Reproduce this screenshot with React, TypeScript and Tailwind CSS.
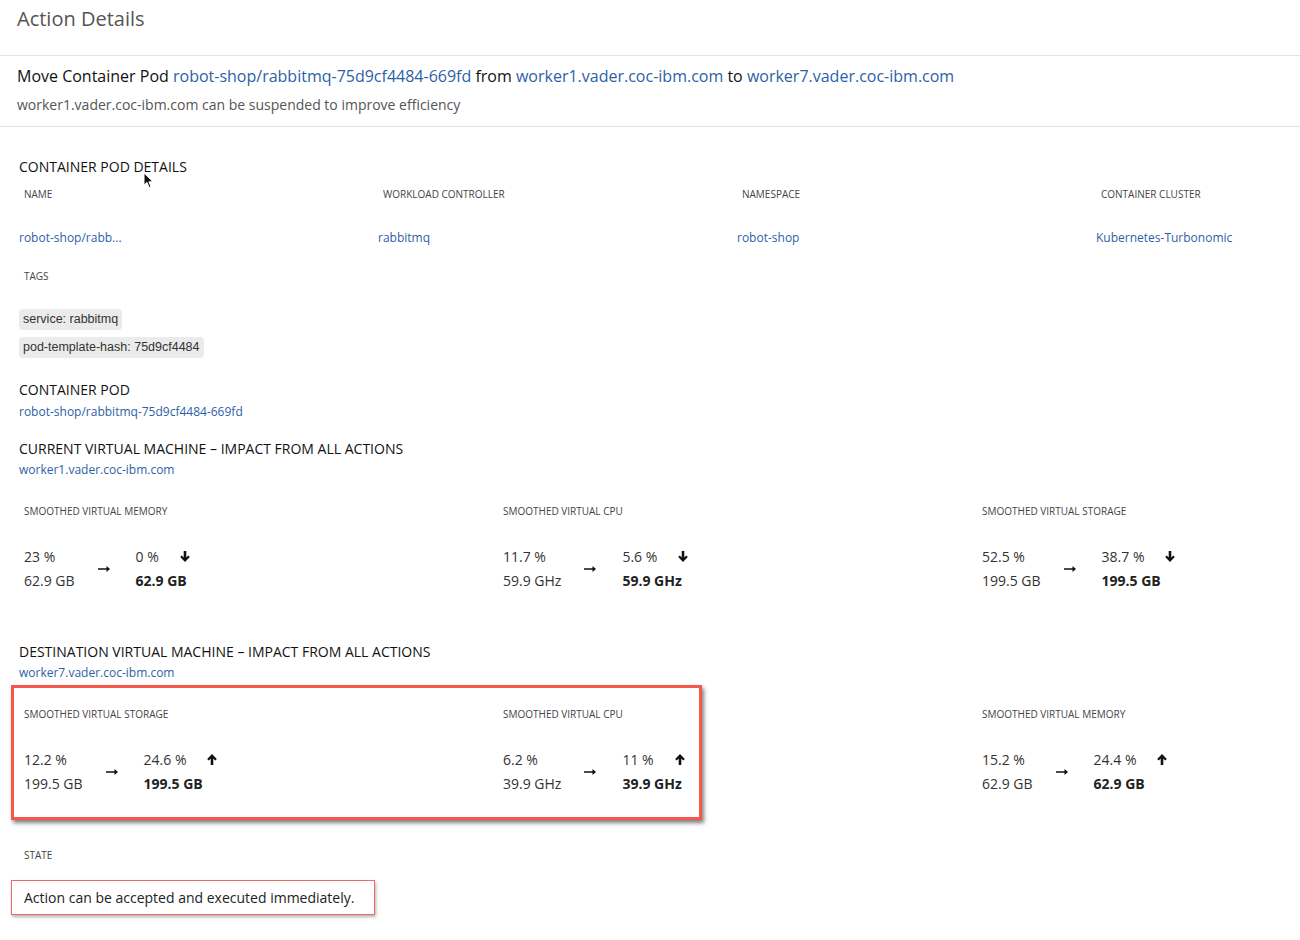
import React from 'react'

const font = { fontFamily: '"Open Sans", "Liberation Sans", sans-serif' }

function DownIcon() {
  return (
    <svg width="10" height="11" viewBox="0 0 10 11" className="fill-[#111]">
      <path d="M5 11 L0.2 6.1 L1.8 4.5 L3.7 6.5 V0 H6.3 V6.5 L8.2 4.5 L9.8 6.1 Z" />
    </svg>
  )
}

function UpIcon() {
  return (
    <svg width="10" height="11" viewBox="0 0 10 11" className="fill-[#111]">
      <path d="M5 0 L0.2 4.9 L1.8 6.5 L3.7 4.5 V11 H6.3 V4.5 L8.2 6.5 L9.8 4.9 Z" />
    </svg>
  )
}

function RightArrow() {
  return (
    <svg width="12" height="6" viewBox="0 0 12 6" className="fill-[#111]">
      <path d="M0 2.2 H8.5 V0 L12 3 L8.5 6 V3.8 H0 Z" />
    </svg>
  )
}

function Cursor() {
  return (
    <svg width="12" height="17" viewBox="0 0 12 17">
      <path d="M1 1 L1 13 L4 10.5 L6.2 15.5 L8 14.7 L5.9 9.8 L10 9.8 Z" fill="#111" stroke="#fff" strokeWidth="1" />
    </svg>
  )
}

type Metric = {
  label: string
  fromPct: string
  fromVal: string
  toPct: string
  toVal: string
  up: boolean
}

const CURRENT: Metric[] = [
  { label: 'Smoothed Virtual Memory', fromPct: '23 %', fromVal: '62.9 GB', toPct: '0 %', toVal: '62.9 GB', up: false },
  { label: 'Smoothed Virtual CPU', fromPct: '11.7 %', fromVal: '59.9 GHz', toPct: '5.6 %', toVal: '59.9 GHz', up: false },
  { label: 'Smoothed Virtual Storage', fromPct: '52.5 %', fromVal: '199.5 GB', toPct: '38.7 %', toVal: '199.5 GB', up: false },
]

const DESTINATION: Metric[] = [
  { label: 'Smoothed Virtual Storage', fromPct: '12.2 %', fromVal: '199.5 GB', toPct: '24.6 %', toVal: '199.5 GB', up: true },
  { label: 'Smoothed Virtual CPU', fromPct: '6.2 %', fromVal: '39.9 GHz', toPct: '11 %', toVal: '39.9 GHz', up: true },
  { label: 'Smoothed Virtual Memory', fromPct: '15.2 %', fromVal: '62.9 GB', toPct: '24.4 %', toVal: '62.9 GB', up: true },
]

function MetricCell({ m }: { m: Metric }) {
  return (
    <div className="w-[479px] shrink-0 last:w-auto last:flex-1">
      <div className="text-[10px] leading-[14px] uppercase text-[#444]">{m.label}</div>
      <div className="mt-[29px] flex items-center gap-[23px] text-[14px] text-[#333]">
        <div className="flex flex-col gap-[5px] leading-[19px]">
          <div>{m.fromPct}</div>
          <div>{m.fromVal}</div>
        </div>
        <RightArrow />
        <div className="ml-[3px] flex flex-col gap-[5px] leading-[19px]">
          <div className="flex items-center gap-[21px]">
            <span>{m.toPct}</span>
            {m.up ? <UpIcon /> : <DownIcon />}
          </div>
          <div className="font-bold text-[#222]">{m.toVal}</div>
        </div>
      </div>
    </div>
  )
}

function Heading({ children }: { children: React.ReactNode }) {
  return <div className="text-[14px] leading-[20px] uppercase text-[#111] font-medium">{children}</div>
}

function Link({ children }: { children: React.ReactNode }) {
  return <a className="block text-[12px] leading-[16px] text-[#2d5fa6]">{children}</a>
}

const DETAILS = [
  { label: 'Name', value: 'robot-shop/rabb...' },
  { label: 'Workload Controller', value: 'rabbitmq' },
  { label: 'Namespace', value: 'robot-shop' },
  { label: 'Container Cluster', value: 'Kubernetes-Turbonomic' },
]

export default function App() {
  return (
    <div className="min-h-[940px] overflow-hidden bg-white text-[#222]" style={font}>
      {/* header */}
      <div className="h-[56px] border-b border-[#e3e3e3] px-[17px] pt-[6px]">
        <h1 className="text-[20px] leading-[26px] text-[#555]">Action Details</h1>
      </div>

      <div className="border-b border-[#e3e3e3] px-[17px] pt-[9px] pb-[11px]">
        <div className="text-[16px] leading-[22px] text-[#111]">
          Move Container Pod <a className="text-[#2d5fa6]">robot-shop/rabbitmq-75d9cf4484-669fd</a> from{' '}
          <a className="text-[#2d5fa6]">worker1.vader.coc-ibm.com</a> to{' '}
          <a className="text-[#2d5fa6]">worker7.vader.coc-ibm.com</a>
        </div>
        <div className="mt-[8px] text-[14px] leading-[20px] text-[#555]">
          worker1.vader.coc-ibm.com can be suspended to improve efficiency
        </div>
      </div>

      <div className="relative px-[19px] pt-[30px] pb-[40px]">
        <div className="absolute left-[143px] top-[45px]">
          <Cursor />
        </div>

        <Heading>Container Pod Details</Heading>
        <div className="mt-[10px] flex">
          {DETAILS.map(d => (
            <div key={d.label} className="w-[359px] shrink-0 last:w-auto last:flex-1">
              <div className="pl-[5px] text-[10px] leading-[14px] uppercase text-[#444]">{d.label}</div>
              <div className="mt-[29px]"><Link>{d.value}</Link></div>
            </div>
          ))}
        </div>

        <div className="mt-[23px] pl-[5px] text-[10px] leading-[14px] uppercase text-[#444]">Tags</div>
        <div className="mt-[26px] flex flex-col items-start gap-[7px]" style={{ fontFamily: '"Liberation Sans", Arial, sans-serif' }}>
          <span className="h-[21px] leading-[21px] rounded-[4px] bg-[#ebebeb] px-[4px] text-[12.5px] text-[#333]">service: rabbitmq</span>
          <span className="h-[21px] leading-[21px] rounded-[4px] bg-[#ebebeb] px-[4px] text-[12.5px] text-[#333]">pod-template-hash: 75d9cf4484</span>
        </div>

        <div className="mt-[22px]"><Heading>Container Pod</Heading></div>
        <div className="mt-[4px]"><Link>robot-shop/rabbitmq-75d9cf4484-669fd</Link></div>

        <div className="mt-[19px]"><Heading>Current Virtual Machine – Impact From All Actions</Heading></div>
        <div className="mt-[3px]"><Link>worker1.vader.coc-ibm.com</Link></div>

        <div className="mt-[26px] flex pl-[5px]">
          {CURRENT.map(m => <MetricCell key={m.label} m={m} />)}
        </div>

        <div className="mt-[52px]"><Heading>Destination Virtual Machine – Impact From All Actions</Heading></div>
        <div className="mt-[3px]"><Link>worker7.vader.coc-ibm.com</Link></div>

        <div className="relative mt-[26px] flex pl-[5px]">
          {DESTINATION.map(m => <MetricCell key={m.label} m={m} />)}
          <div className="pointer-events-none absolute left-[-8px] top-[-22px] h-[135px] w-[691px] border-[3px] border-[#f4574b] shadow-[2px_3px_4px_rgba(0,0,0,0.5)]" />
        </div>

        <div className="mt-[55px] pl-[5px] text-[10px] leading-[14px] uppercase text-[#444]">State</div>
        <div className="mt-[18px] ml-[-8px] flex h-[35px] w-[364px] items-center border border-[#ee6a62] pl-[12px] text-[14px] text-[#222] shadow-[1px_2px_3px_rgba(0,0,0,0.3)]">
          Action can be accepted and executed immediately.
        </div>
      </div>
    </div>
  )
}
